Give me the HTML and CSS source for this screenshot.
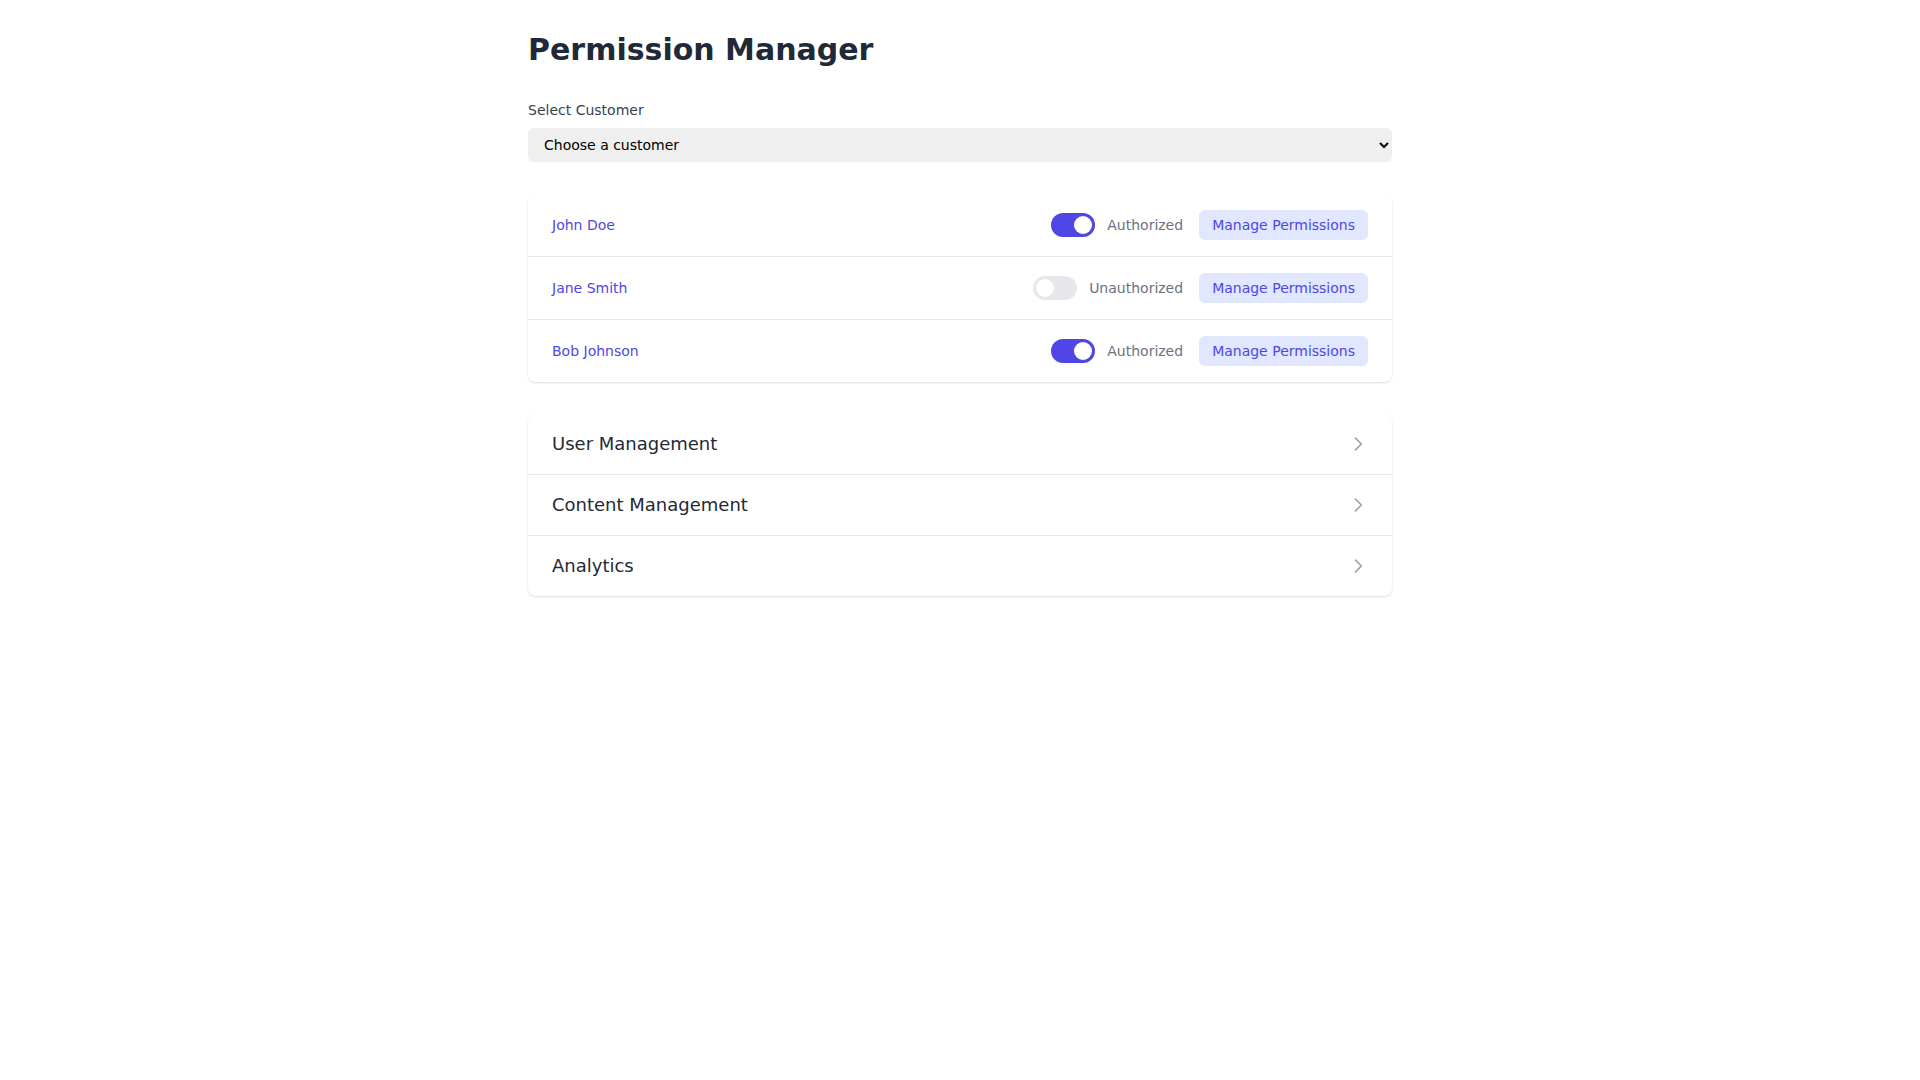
FILE: index.html
```html
<!DOCTYPE html>
<html lang="en">
<head>
<meta charset="utf-8">
<title>Permission Manager</title>
<link rel="stylesheet" href="styles.css">
</head>
<body>
<main class="page">
  <h1 class="title">Permission Manager</h1>

  <label class="field-label" for="customer">Select Customer</label>
  <select id="customer" class="select">
    <option>Choose a customer</option>
    <option>John Doe</option>
    <option>Jane Smith</option>
    <option>Bob Johnson</option>
  </select>

  <section class="card">
    <div class="user-row">
      <span class="user-name">John Doe</span>
      <div class="user-actions">
        <div class="status">
          <span class="toggle on"><span class="knob"></span></span>
          <span class="status-text">Authorized</span>
        </div>
        <button class="btn-manage">Manage Permissions</button>
      </div>
    </div>
    <div class="user-row">
      <span class="user-name">Jane Smith</span>
      <div class="user-actions">
        <div class="status">
          <span class="toggle"><span class="knob"></span></span>
          <span class="status-text">Unauthorized</span>
        </div>
        <button class="btn-manage">Manage Permissions</button>
      </div>
    </div>
    <div class="user-row">
      <span class="user-name">Bob Johnson</span>
      <div class="user-actions">
        <div class="status">
          <span class="toggle on"><span class="knob"></span></span>
          <span class="status-text">Authorized</span>
        </div>
        <button class="btn-manage">Manage Permissions</button>
      </div>
    </div>
  </section>

  <section class="card">
    <div class="section-row">
      <span class="section-name">User Management</span>
      <svg class="chevron" viewBox="0 0 24 24" fill="none" stroke="currentColor" stroke-width="2" stroke-linecap="round" stroke-linejoin="round"><path d="M9 5l7 7-7 7"/></svg>
    </div>
    <div class="section-row">
      <span class="section-name">Content Management</span>
      <svg class="chevron" viewBox="0 0 24 24" fill="none" stroke="currentColor" stroke-width="2" stroke-linecap="round" stroke-linejoin="round"><path d="M9 5l7 7-7 7"/></svg>
    </div>
    <div class="section-row">
      <span class="section-name">Analytics</span>
      <svg class="chevron" viewBox="0 0 24 24" fill="none" stroke="currentColor" stroke-width="2" stroke-linecap="round" stroke-linejoin="round"><path d="M9 5l7 7-7 7"/></svg>
    </div>
  </section>
</main>
</body>
</html>
```

FILE: styles.css
```css
* {
  box-sizing: border-box;
}

body {
  margin: 0;
  background: #ffffff;
  font-family: "DejaVu Sans", "Noto Sans", sans-serif;
  color: #1f2937;
}

.page {
  max-width: 896px;
  margin: 0 auto;
  padding: 32px 16px;
}

.title {
  margin: 0 0 32px;
  font-size: 30px;
  line-height: 36px;
  font-weight: 700;
  color: #1f2937;
}

.field-label {
  display: block;
  margin-bottom: 8px;
  font-size: 14px;
  line-height: 20px;
  color: #374151;
}

.select {
  display: block;
  width: 100%;
  height: 34px;
  margin: 0 0 32px;
  padding: 0 8px 0 12px;
  border: none;
  border-radius: 6px;
  background-color: #efefef;
  font-family: "DejaVu Sans", sans-serif;
  font-size: 14px;
  color: #000000;
}

.card {
  margin-bottom: 32px;
  background: #ffffff;
  border-radius: 8px;
  box-shadow: 0 1px 3px rgba(0, 0, 0, 0.08), 0 1px 2px rgba(0, 0, 0, 0.05);
  overflow: hidden;
}

.user-row,
.section-row {
  display: flex;
  align-items: center;
  justify-content: space-between;
  padding: 16px 24px;
  border-top: 1px solid #e5e7eb;
}

.user-row:first-child,
.section-row:first-child {
  border-top: none;
}

.user-name {
  font-size: 14px;
  line-height: 20px;
  color: #4f46e5;
}

.user-actions {
  display: flex;
  align-items: center;
  gap: 16px;
}

.status {
  display: flex;
  align-items: center;
  gap: 12px;
}

.toggle {
  position: relative;
  display: block;
  width: 44px;
  height: 24px;
  border-radius: 999px;
  background: #e5e7eb;
}

.toggle.on {
  background: #4f46e5;
}

.knob {
  position: absolute;
  top: 3px;
  left: 3px;
  width: 18px;
  height: 18px;
  border-radius: 50%;
  background: #ffffff;
}

.toggle.on .knob {
  left: 23px;
}

.status-text {
  font-size: 14px;
  line-height: 20px;
  color: #6b7280;
}

.btn-manage {
  height: 30px;
  padding: 0 13px;
  border: none;
  border-radius: 6px;
  background: #e0e7ff;
  font-family: "DejaVu Sans", sans-serif;
  font-size: 14px;
  line-height: 20px;
  color: #4f46e5;
  cursor: pointer;
}

.section-name {
  font-size: 18px;
  line-height: 28px;
  color: #1f2937;
}

.chevron {
  width: 20px;
  height: 20px;
  color: #9ca3af;
}
```
